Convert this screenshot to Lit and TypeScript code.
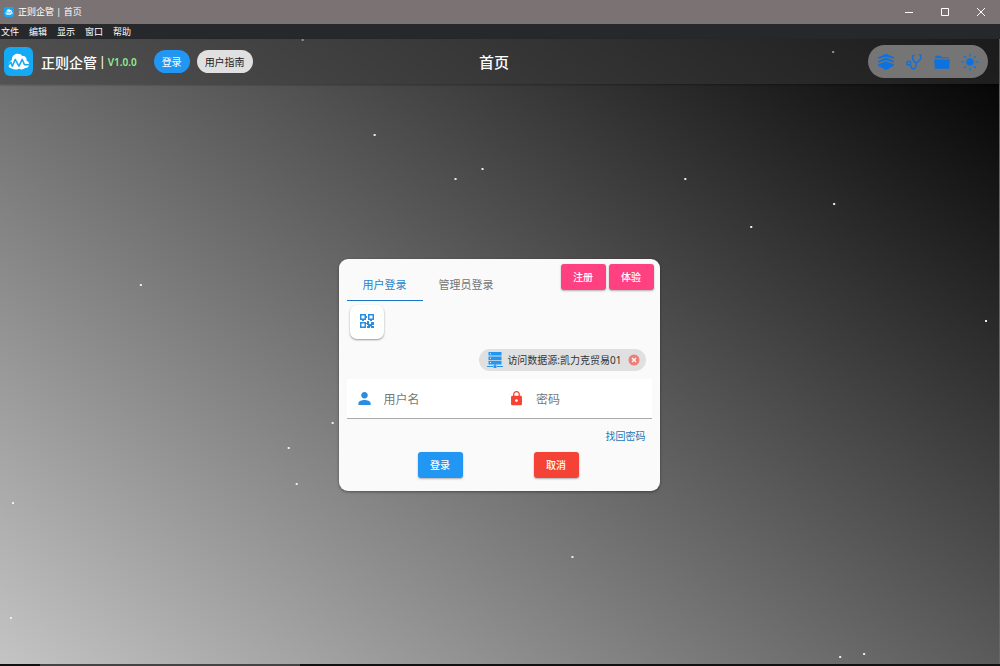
import { LitElement, html, svg, css } from "lit";
import { customElement, state } from "lit/decorators.js";

// Star positions, in thousandths of the sky's width and in 625ths of its height.
const STARS: [number, number][] = [
  [302, 0], [833, 12], [374, 95], [482, 129], [455, 139], [685, 139], [834, 164],
  [751, 187], [140, 245], [986, 281], [332, 383], [288, 408], [296, 444], [12, 463],
  [572, 517], [10, 578], [840, 617], [864, 614],
];

const logo = html`<svg class="logo" viewBox="0 0 28 28" aria-hidden="true">
  <rect width="28" height="28" rx="6" fill="#14a9f5" />
  <path d="M7.500 20.800C5 20.500 3.800 18.500 4.300 16.500C4.700 14.600 5.800 13.400 7.600 12.800C7.300 9 10 6.500 13.200 6.500C15.300 6.500 16.700 7.300 17.700 8.700C20.500 8.500 22.200 10.600 21.800 13.200C23.800 13.800 24.700 15.500 24.300 17.400C23.900 19.400 22.400 20.500 20.500 20.300C18.500 22 16.500 22 14.500 21C12 22.200 9.500 22 7.500 20.800Z" fill="#fff" />
  <path d="M3.500 17.800L6.600 14.600L8 18.600L10.800 12L14.400 18.400L17.600 12L19.800 17.200L24.500 17" fill="none" stroke="#14a9f5" stroke-width="1.500" stroke-linejoin="round" />
</svg>`;

@customElement("app-root")
export class AppRoot extends LitElement {
  @state() private tab = 0;

  static styles = css`
    :host {
      display: flex;
      flex-direction: column;
      min-height: 100vh;
      overflow: hidden;
      box-sizing: border-box;
      color: #fff;
      font-family: "Noto Sans", "Noto Sans CJK SC", sans-serif;
      font-size: 10px;
    }
    button, input { font: inherit; color: inherit; border: 0; padding: 0; margin: 0; background: none; }
    button { cursor: pointer; white-space: nowrap; }
    .titlebar { display: flex; align-items: center; height: 24px; background: #7b7373; padding: 0 1px 0 4px; gap: 4px; font-size: 9px; line-height: 24px; }
    .titlebar .logo { width: 10px; height: 10px; }
    .title { flex: 1; }
    .controls { display: flex; }
    .win { display: grid; place-items: center; width: 36px; height: 24px; }
    .win svg { width: 10px; height: 10px; }
    .menubar { display: flex; height: 15px; background: #27282c; padding-left: 1px; gap: 10px; line-height: 15px; }
    .menubar button { line-height: 15px; font-size: 9px; }
    .page {
      position: relative;
      flex: 1;
      display: flex;
      flex-direction: column;
      border-right: 1px solid #666;
      background: linear-gradient(36deg, #c4c4c4, #000);
    }
    .sky { position: absolute; inset: 0; width: 100%; height: 100%; pointer-events: none; }
    .appbar {
      position: relative;
      display: grid;
      grid-template-columns: 1fr auto 1fr;
      align-items: center;
      height: 45px;
      padding: 0 11px 0 4px;
      background: rgba(54, 54, 54, 0.5);
      box-shadow: 0 1px 2px rgba(0, 0, 0, 0.3);
    }
    .brand { display: flex; align-items: center; white-space: nowrap; }
    .brand .logo { width: 29px; height: 29px; }
    .name { font-size: 14px; font-weight: 500; margin-left: 8px; }
    .bar { font-size: 12px; font-weight: 500; margin-left: 2px; }
    .ver { font-size: 10px; font-weight: 600; color: #90ee90; margin-left: 2px; }
    .pill { height: 23px; border-radius: 12px; padding: 0 8px; font-size: 10px; }
    .pill.login { background: #2196f3; margin-left: 17px; }
    .pill.guide { background: #e0e0e0; color: #222; margin-left: 7px; }
    h1 { margin: 0 4px 0 0; font-size: 15px; line-height: 20px; font-weight: 500; }
    .tools { justify-self: end; display: flex; align-items: center; gap: 10px; height: 33px; padding: 0 9px; border-radius: 17px; background: #757575; }
    .tools button, .tools svg { display: block; width: 18px; height: 18px; }
    .tools svg { fill: #0b72e0; }
    main { flex: 1; display: grid; place-items: center; position: relative; padding: 1px 1px 0 0; }
    .card {
      box-sizing: border-box;
      width: 321px;
      border-radius: 9px;
      padding: 5px 8px 13px;
      background: #fafafa;
      color: #333;
      box-shadow: 0 1px 3px rgba(0, 0, 0, 0.4);
    }
    .top { display: flex; align-items: flex-start; }
    .tabs { display: flex; margin-top: 5px; flex: 1; }
    .tabs button { height: 32px; padding: 0 16px; color: #757575; font-size: 11px; border-bottom: 1px solid transparent; }
    .tabs .on { color: #2485d0; border-color: #1976c8; }
    .btn { width: 45px; height: 26px; border-radius: 3px; color: #fff; font-weight: 500; box-shadow: 0 1px 2px rgba(0, 0, 0, 0.3); }
    .pink { background: #ff4081; }
    .blue { background: #2196f3; }
    .red { background: #f44336; }
    .extra { display: flex; gap: 3px; margin-right: -2px; }
    .qr { display: grid; place-items: center; width: 34px; height: 34px; margin: 4px 0 0 3px; border-radius: 7px; background: #fff; box-shadow: 0 1px 2px rgba(0, 0, 0, 0.4); }
    .qr svg { width: 18px; height: 18px; fill: #2b8de0; margin-bottom: 2px; }
    .source { display: flex; justify-content: flex-end; padding: 10px 6px 8px 0; }
    .chip { display: flex; align-items: center; height: 22px; border-radius: 11px; background: #e0e0e0; padding: 0 6px 0 8px; white-space: nowrap; }
    .chip > svg { width: 16px; height: 16px; margin-right: 4px; }
    .chip button { margin-left: 6px; width: 12px; height: 12px; }
    .chip button svg { display: block; width: 12px; height: 12px; }
    .fields { display: grid; grid-template-columns: 1fr 1fr; }
    .fields label { display: flex; align-items: center; gap: 12px; height: 40px; padding: 0 10px; background: #fff; border-bottom: 1px solid #aaa; box-sizing: border-box; }
    .fields svg { width: 15px; height: 15px; flex: none; }
    .fields input { min-width: 0; width: 100%; flex: 1; font-size: 12px; outline: none; padding-top: 2px; }
    .fields input::placeholder { color: #777; opacity: 1; }
    .forgot { display: flex; justify-content: flex-end; padding: 9px 6px 8px 0; line-height: 16px; }
    .forgot a { color: #1976b8; text-decoration: none; }
    .actions { display: flex; justify-content: center; gap: 71px; padding-right: 2px; }
    .edge { height: 2px; background: linear-gradient(to right, #111 4%, #444 4%, #444 30%, #111 30%); }
  `;

  render() {
    return html`
      <header class="titlebar">
        ${logo}<span class="title">正则企管 | 首页</span>
        <div class="controls">
          <button class="win" aria-label="最小化"><svg viewBox="0 0 10 10"><path d="M1 5.500h8" stroke="#fff" /></svg></button>
          <button class="win" aria-label="最大化"><svg viewBox="0 0 10 10"><path d="M1.500 1.500h7v7h-7z" fill="none" stroke="#fff" /></svg></button>
          <button class="win" aria-label="关闭"><svg viewBox="0 0 10 10"><path d="M1 1l8 8M9 1l-8 8" stroke="#fff" /></svg></button>
        </div>
      </header>
      <nav class="menubar">
        ${["文件", "编辑", "显示", "窗口", "帮助"].map((m) => html`<button>${m}</button>`)}
      </nav>
      <div class="page">
        <svg class="sky" aria-hidden="true">
          ${STARS.map(([x, y]) => svg`<rect x="${x / 10}%" y="${y / 6.25}%" width="2" height="2" fill="#eee" />`)}
        </svg>
        <div class="appbar">
          <div class="brand">
            ${logo}
            <span class="name">正则企管</span><span class="bar">|</span><span class="ver">V1.0.0</span>
            <button class="pill login">登录</button>
            <button class="pill guide">用户指南</button>
          </div>
          <h1>首页</h1>
          <div class="tools">
            <button aria-label="图层"><svg viewBox="0 0 24 24"><path d="M12 1L22.500 5.500v2L12 5 1.500 7.500v-2z" /><path d="M12 6L22.500 10.500v2L12 9.800 1.500 12.500v-2z" /><path d="M12 11.200L22.500 15v2L12 22.500 1.500 17v-2z" /></svg></button>
            <button aria-label="诊断"><svg viewBox="0 0 24 24"><g fill="none" stroke="#0b72e0" stroke-width="1.900" stroke-linecap="round" stroke-linejoin="round"><path d="M12 3l-2 1c0 4 1.500 8 4.500 9 4-1 6.500-4.500 7-9l-2-2M14.500 13c1 4-.3 8-3.300 8.300-3.500.2-2.500-4-4.400-5.600" /><circle cx="5" cy="13.500" r="2.500" /></g></svg></button>
            <button aria-label="文件夹"><svg viewBox="0 0 24 24"><path d="M3 7V3.500h7l2 2h9V7z" /><path d="M1.500 8.500h21L21.500 21h-19z" /></svg></button>
            <button aria-label="主题"><svg viewBox="0 0 24 24"><circle cx="12" cy="12" r="5" /><path d="M12 1v3M12 20v3M1 12h3M20 12h3M4.300 4.300l2 2M17.700 17.700l2 2M4.300 19.700l2-2M17.700 6.300l2-2" stroke="#0b72e0" stroke-width="1.500" stroke-linecap="round" /></svg></button>
          </div>
        </div>
        <main>
          <form class="card" @submit=${(e: Event) => e.preventDefault()}>
            <div class="top">
              <div class="tabs" role="tablist">
                ${["用户登录", "管理员登录"].map((t, i) => html`<button type="button" role="tab" aria-selected=${this.tab === i} class=${this.tab === i ? "on" : ""} @click=${() => (this.tab = i)}>${t}</button>`)}
              </div>
              <div class="extra">
                <button type="button" class="btn pink">注册</button>
                <button type="button" class="btn pink">体验</button>
              </div>
            </div>
            <button type="button" class="qr" aria-label="二维码登录"><svg viewBox="0 0 18 18"><path fill-rule="evenodd" d="M2 2h6v6H2zM3.500 3.500v3h3v-3zM10 2h6v6h-6zM11.500 3.500v3h3v-3zM2 10h6v6H2zM3.500 11.500v3h3v-3zM9 9h2v3h2v-2h3v3h-2v1h2v2h-3v-1.500h-1V16h-3v-2h1v-1H9zM8 4h1v2H8zM4 8h2v1H4zM8 11h1v1H8zM12 8h2v1h-2z" /></svg></button>
            <div class="source">
              <div class="chip">
                <svg viewBox="0 0 16 16"><path d="M1.500 0h13v3.600h-13zM1.500 4.400h13V8h-13zM1.500 8.800h13v3.600h-13zM7.500 12.400h1V14h-1zM0 14h6v1H0zM10 14h6v1h-6zM6.500 13.200h3V16h-3z" fill="#2196f3" /><path d="M3 1.800h1M3 6.200h1M3 10.600h1" stroke="#fff" /></svg>
                <span>访问数据源:凯力克贸易01</span>
                <button type="button" aria-label="移除数据源"><svg viewBox="0 0 12 12"><circle cx="6" cy="6" r="5.500" fill="#ea8078" /><path d="M4 4l4 4M8 4L4 8" stroke="#fff" stroke-width="1.200" /></svg></button>
              </div>
            </div>
            <div class="fields">
              <label><svg viewBox="4 4 16 16" fill="#2b8de0"><path d="M12 12c2 0 3.500-1.500 3.500-3.500S14 5 12 5 8.500 6.500 8.500 8.500 10 12 12 12zM12 13.500c-2.500 0-6.500 1.200-6.500 3.500v2h13v-2c0-2.300-4-3.500-6.500-3.500z" /></svg><input type="text" placeholder="用户名" aria-label="用户名" /></label>
              <label><svg viewBox="3 1 18 22" fill="#f44336"><path fill-rule="evenodd" d="M18 8h-1V6c0-2.760-2.240-5-5-5S7 3.240 7 6v2H6c-1.100 0-2 .9-2 2v10c0 1.100.9 2 2 2h12c1.100 0 2-.9 2-2V10c0-1.100-.9-2-2-2zM12 17c-1.100 0-2-.9-2-2s.9-2 2-2 2 .9 2 2-.9 2-2 2zM15.100 8H8.900V6c0-1.710 1.390-3.100 3.100-3.100s3.100 1.390 3.100 3.100z" /></svg><input type="password" placeholder="密码" aria-label="密码" /></label>
            </div>
            <div class="forgot"><a href="#">找回密码</a></div>
            <div class="actions">
              <button class="btn blue">登录</button>
              <button type="button" class="btn red">取消</button>
            </div>
          </form>
        </main>
      </div>
      <div class="edge"></div>
    `;
  }
}
